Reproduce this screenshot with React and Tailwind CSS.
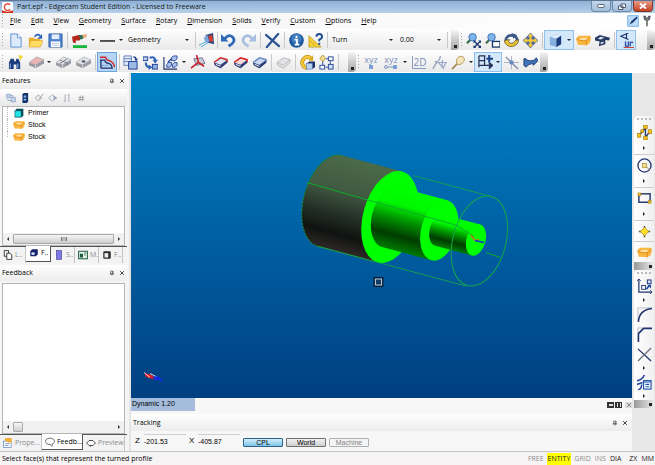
import React, { useState } from 'react';

const NAVY = '#1c3f94';

const stockShape = (
  <>
    <path d="M0 6 L3 3 L15 3 L16 6 L14.500 11 L11 13 L2 12.500 Z" fill="#f9b642" />
    <path d="M3 7 L6 5 L13 5.500 L9 8 Z" fill="#ffe0a0" />
    <path d="M1 6 L4 8 L11 8.500 L15 4 M11 8.500 V13" stroke="#e08a1a" fill="none" />
  </>
);

const solidShape = (top, edge) => (
  <>
    <path d="M1 8 L8 3 L15 5 L15 8 L8 14 L2 11 Z" fill="#5d6f96" />
    <path d="M1 8 L8 3 L15 5 L8 10.500 Z" fill={top} />
    <path d="M1 8 L8 3 L15 5 L15 8" stroke={edge} strokeWidth="1.600" fill="none" />
    <path d="M1 8 L8 11 L15 6 L15 8.500 L8 14 L2 11 Z" fill="#2c3c74" />
    <path d="M3 10 L8 12" stroke="#fff" strokeWidth="1" />
  </>
);

const greyBlock = (top) => (
  <>
    <path d="M0 8 L8 2 L16 5 V9 L7 14 L0 11 Z" fill="#9a9ca5" />
    <path d="M0 8 L8 2 L16 5 L7 10.500 Z" fill={top} stroke="#a9abb3" strokeWidth=".6" />
    <path d="M7 10.500 V14" stroke="#d9dae0" />
  </>
);

const ICONS = {
  logo: (
    <>
      <rect width="16" height="16" rx="2" fill="#fff" />
      <path d="M12 4 A5 5 0 1 0 12 11" stroke="#e04a3a" strokeWidth="2" fill="none" />
      <path d="M0 12 Q8 16 16 12 V16 H0 Z" fill="#d8301f" />
    </>
  ),
  newFile: (
    <>
      <path d="M3 1 H10 L14 5 V15 H3 Z" fill="#dcebfb" stroke="#5f8fd0" />
      <path d="M10 1 V5 H14" fill="#fff" stroke="#5f8fd0" />
    </>
  ),
  open: (
    <>
      <path d="M1 5 H6 L7 6 H13 V15 H1 Z" fill="#e8b030" />
      <path d="M3 8 H16 L13 15 H1 Z" fill="#ffdc62" stroke="#d79c1c" strokeWidth=".6" />
      <path d="M7 4 Q10 0 13 3" stroke="#2c62b8" strokeWidth="1.800" fill="none" />
      <path d="M15 1 V6 H10 Z" fill="#2c62b8" />
    </>
  ),
  save: (
    <>
      <path d="M1 1 H15 V15 H1 Z" fill="#4f84cf" stroke="#2f5ea8" />
      <rect x="4" y="1.500" width="8" height="5" fill="#e4eefb" />
      <rect x="3" y="9" width="10" height="6" fill="#fff" />
      <path d="M4 11 H12 M4 13 H12" stroke="#9fb8dc" strokeWidth=".8" />
    </>
  ),
  brush: (
    <>
      <path d="M16 1 L10 2 L8 6 L15 5 Z" fill="#e7b07c" />
      <path d="M0 4 L7 2 L10 5 L8 8 L4 8 L4 11 L1 10 Z" fill="#b3261b" />
      <path d="M7 2 L11 2 L12 6 L9 7 Z" fill="#2b6f5a" />
      <rect x="1" y="13" width="15" height="3" fill="#18b43c" />
    </>
  ),
  line: <path d="M0 8.500 H16" stroke="#222" strokeWidth="1.600" />,
  eraser: (
    <>
      <path d="M7 2 L15 0 L16 12 L9 10 Z" fill="#24467f" />
      <path d="M10 3 L14 2 L15 9 L11 9 Z" fill="#d7402f" />
      <path d="M5 5 L9 2 L11 9 L7 10 Z" fill="#7fa4d8" />
      <path d="M0 13 L8 9 M2 15 L10 10" stroke="#4aa8d8" strokeWidth="1" />
    </>
  ),
  undo: (
    <>
      <path d="M4 6 Q9 0 13 5 Q16 10 8 14" stroke="#2f69b8" strokeWidth="3" fill="none" />
      <path d="M0 1 V9 H8 Z" fill="#2f69b8" />
    </>
  ),
  redo: (
    <>
      <path d="M12 6 Q7 0 3 5 Q0 10 8 14" stroke="#a9bfdf" strokeWidth="3" fill="none" />
      <path d="M16 1 V9 H8 Z" fill="#a9bfdf" />
    </>
  ),
  cross: <path d="M1 2 L15 14 M14 1 L2 15" stroke="#2c5596" strokeWidth="2.400" strokeLinecap="round" />,
  info: (
    <>
      <circle cx="8" cy="8" r="7.800" fill="#1f5a9e" />
      <circle cx="8" cy="6" r="5.500" fill="#3f7cc0" />
      <path d="M8 3 V5.200 M6 7 H8.500 V12 M6 12.500 H11" stroke="#fff" strokeWidth="1.900" fill="none" />
    </>
  ),
  help: (
    <>
      <path d="M1 3 L14 15 H1 Z" fill="#f6d33a" stroke="#b8931a" strokeWidth=".8" />
      <path d="M3 9 L7 13" stroke="#8a6b10" strokeWidth="1" strokeDasharray="1 1" />
      <path d="M9 4 Q9 1 12 1 Q15 1 15 4 Q15 6 12 7 V9" stroke="#1d4b96" strokeWidth="2" fill="none" />
      <circle cx="12" cy="11.500" r="1.200" fill="#1d4b96" />
    </>
  ),
  zoomAll: (
    <>
      <path d="M1 11 L5 7" stroke="#3b6f4c" strokeWidth="2.400" />
      <circle cx="7" cy="4.500" r="4" fill="#7fb4ea" stroke="#3a72b8" />
      <path d="M9 9 L15 15 M15 9 L9 15" stroke="#16356f" strokeWidth="1.400" />
      <path d="M8 8 h3 l-3 3 z M16 8 v3 l-3 -3 z M8 16 v-3 l3 3 z M16 16 h-3 l3 -3 z" fill="#16356f" />
    </>
  ),
  zoomBox: (
    <>
      <path d="M1 11 L5 7" stroke="#3b6f4c" strokeWidth="2.400" />
      <circle cx="7" cy="4.500" r="4" fill="#7fb4ea" stroke="#3a72b8" />
      <rect x="8" y="9" width="8" height="6" fill="#fff" stroke="#16356f" strokeWidth="1.400" />
    </>
  ),
  rotate: (
    <>
      <ellipse cx="8" cy="7.500" rx="6" ry="5" stroke="#3a5486" strokeWidth="3" fill="none" />
      <path d="M0 8 Q2 15 9 14.500 Q15 13 16 7 L12 8 Q11 11 8 11 Q5 11 5 9 L6 7 Z" fill="#ecc32f" stroke="#5b5a3a" strokeWidth=".8" />
      <path d="M8 0 L14 2 L10 6 Z" fill="#3a5486" />
    </>
  ),
  pan: (
    <>
      <path d="M4 4 L12 12 M12 4 L4 12" stroke="#27479a" strokeWidth="1.800" />
      <path d="M8 0 L11.500 4 H9.500 V6.500 H12 V4.500 L16 8 L12 11.500 V9.500 H9.500 V12 H11.500 L8 16 L4.500 12 H6.500 V9.500 H4 V11.500 L0 8 L4 4.500 V6.500 H6.500 V4 H4.500 Z" fill="#f4cc35" stroke="#5b6698" strokeWidth=".9" />
    </>
  ),
  cube: (
    <>
      <path d="M2 4 L8 1 L14 3 V12 L9 15 L2 13 Z" fill="#86aede" />
      <path d="M2 4 L8 1 L14 3 L9 6 Z" fill="#dceafb" />
      <path d="M9 6 L14 3 V12 L9 15 Z" fill="#1d3c7c" />
    </>
  ),
  stock: stockShape,
  hat: (
    <>
      <path d="M0 5 L5 2 L16 5 L15 8 L11 7.500 L11 12 L4 14 L5 9 L0 8 Z" fill="#2a3b63" />
      <path d="M3 6 L6 4 L10 5 L6 7 Z M6 10 L9 9 V11 L6 12 Z" fill="#dde4f2" />
    </>
  ),
  view: (
    <>
      <path d="M10 0 L2 3.500 L10 7 M8 1 V6" stroke="#1a2f66" strokeWidth="1.200" fill="none" />
      <rect x="5" y="8" width="11" height="8" fill="#c3dcf6" />
      <path d="M7 9 V14 H10 V9 M12 14 V10 H15" stroke="#2b4ea0" strokeWidth="1.300" fill="none" />
      <path d="M5 15.500 H16" stroke="#d23322" strokeWidth="1" />
    </>
  ),
  binoculars: (
    <>
      <path d="M1 15 V8 L3 4 H6 L7 7 H8 L9 4 H11 L13 8 V15 H9 V10 H6 V15 Z" fill="#1c3d7d" />
      <path d="M2.500 9 V14 M10.500 9 V14" stroke="#7aa5e0" strokeWidth="1.200" />
      <path d="M11 0 L16 1 L13 6 Z" fill="#ecd63a" />
    </>
  ),
  block: greyBlock('#eab5b3'),
  blocks: (
    <>
      {greyBlock('#e2e3e8')}
      <path d="M4 5.500 L12 8.500 V11 M4 9.200 L12 4" stroke="#7c7e88" fill="none" />
    </>
  ),
  blockHole: (
    <>
      {greyBlock('#e2e3e8')}
      <ellipse cx="8" cy="6.800" rx="2" ry="1.300" fill="#555762" />
    </>
  ),
  turn: (
    <>
      <path d="M0 2.500 H6 Q7 6 10 6 Q15 8 15.500 13" stroke="#cf2a2a" strokeWidth="1.600" fill="none" />
      <path d="M0 5.500 H5 Q6 9 9 9 Q13 10 13 15 M1 6 V14 M1 14 H13" stroke="#20336f" strokeWidth="1.400" fill="none" />
      <path d="M2 11 H9" stroke="#5f86bd" strokeDasharray="2 1" />
    </>
  ),
  copyBox: (
    <>
      <path d="M1 1 H9 V11 H1 Z" fill="#e3ecf8" stroke="#5f7fbf" />
      <path d="M1 4 H9 M1 7 H6" stroke="#5f7fbf" />
      <rect x="6" y="7" width="9" height="8" fill="#9dbbe6" stroke={NAVY} />
      <path d="M11 2 Q14 2 14 5" stroke={NAVY} strokeWidth="1.400" fill="none" />
      <path d="M12 4 H16 L14 7 Z" fill={NAVY} />
    </>
  ),
  swap: (
    <>
      <rect x="0" y="2" width="5" height="4" fill="#b9cdec" stroke={NAVY} />
      <rect x="10" y="10" width="6" height="5" fill="#8eaee0" stroke={NAVY} />
      <path d="M7 3 Q13 1 13 6 M3 8 Q3 13 7 13" stroke="#2b60b4" strokeWidth="2.200" fill="none" />
      <path d="M10 5 H16 L13 9 Z M6 10 L10 13 L6 16 Z" fill="#2b60b4" />
    </>
  ),
  array: (
    <>
      <path d="M1 2 V15 H15" stroke="#20336f" strokeWidth="1.200" fill="none" />
      <path d="M9 3 L11 1 H15 V4 L13 6 H9 Z M4 10 L6 8 H9 V11 L7 13 H4 Z M10 10 L12 8 H15 V11 L13 13 H10 Z" fill="#a9c3ee" stroke={NAVY} strokeWidth=".9" />
      <path d="M5 8 L9 4" stroke={NAVY} strokeWidth="1.200" />
    </>
  ),
  axes: (
    <>
      <path d="M4 4 L13 3 L16 9 L7 11 Z" fill="#c9cbd8" stroke="#6c7390" />
      <path d="M7 0 L9 8 L1 14 M9 8 L15 12" stroke="#c8202a" strokeWidth="1.700" fill="none" />
    </>
  ),
  solidBlue: solidShape('#dce6f6', '#cf2a2a'),
  solidRed: solidShape('#f6d8d8', '#d42020'),
  solidGrey: solidShape('#c9d9ef', '#6f8fc2'),
  solidOff: (
    <>
      <path d="M1 8 L8 3 L15 5 V8 L8 14 L2 11 Z" fill="#e3e3e6" stroke="#b9b9be" />
      <path d="M1 8 L8 11 L15 5" stroke="#b9b9be" fill="none" />
    </>
  ),
  regen: (
    <>
      <path d="M12 4 Q8 0 4 4 Q0 9 5 13 L8 14" stroke="#b58510" strokeWidth="4" fill="none" />
      <path d="M12 4 Q8 0 4 4 Q0 9 5 13 L8 14" stroke="#f4c93a" strokeWidth="2.600" fill="none" />
      <path d="M14 0 V6 H9 Z" fill="#d9a820" />
      <path d="M7 9 L10 7 H16 L13 9 Z M13 9 L16 7 V13 L13 15 Z" fill="#20336f" />
      <rect x="7" y="9" width="6" height="6" fill="#bcd4f4" stroke="#4f6fb0" strokeWidth=".6" />
    </>
  ),
  flow: (
    <>
      <path d="M4 6 V11 M7 4 H10 M12 6 V10 M7 13 H10" stroke="#27479a" />
      <path d="M4 0 L7 3.500 L4 7 L1 3.500 Z" fill="#f4e08a" stroke="#a8821a" strokeWidth=".8" />
      <rect x="10" y="2" width="5" height="4" fill="#fff" stroke="#27479a" />
      <rect x="1" y="11" width="5" height="4" fill="#fff" stroke="#27479a" />
      <rect x="10" y="10" width="5" height="5" fill="#cfe0f8" stroke="#27479a" />
    </>
  ),
  polyOff: (
    <>
      <path d="M1 15 Q4 8 6 8 M3 7 Q8 8 9 1" stroke="#9aa4bd" strokeWidth="1.500" fill="none" />
      <path d="M7 8 H15 L12 14 Z M11 5 V14" stroke="#97a5c6" strokeWidth="1.200" fill="none" />
    </>
  ),
  key: (
    <>
      <path d="M1 15 L7 9" stroke="#a08a52" strokeWidth="1.800" />
      <path d="M6 5 Q8 0 13 2 Q16 5 12 9 Q8 12 6 9 Z" fill="#f5e4bb" stroke="#b59a5e" />
    </>
  ),
  snapGrid: (
    <>
      <path d="M1 1 H8 M1 1 V13 M1 6 H7 M1 11 H11 M7 1 V11" stroke="#222f55" strokeWidth="1.300" />
      <path d="M10 11 H15 M12 8 L16 11 L12 15 Z" stroke="#222f55" fill="#222f55" />
      <path d="M12 0 V8 M9 4 H16" stroke="#1c4084" strokeWidth="2.200" />
    </>
  ),
  star: (
    <>
      <path d="M0 8 H16 M8 1 V15" stroke="#a7b0c4" />
      <path d="M2 2 L15 15" stroke="#7e8aa6" strokeWidth="1.400" />
      <rect x="6" y="6" width="4" height="4" fill="#6489c6" />
    </>
  ),
  flag: <path d="M1 4 V11 L3 13 Q6 9 11 9 L11 11 L16 6 L14 3 L13 5 Q6 8 3 4 Z" fill="#3f74bc" stroke="#17366e" />,
  spline: (
    <>
      <path d="M2 11 L6 7 L9 3 V13 L13 8" stroke="#20336f" strokeWidth="1.400" fill="none" />
      <path d="M0 9 h4 v4 h-4z M7 0 h4 v4 h-4z M7 12 h4 v4 h-4z M12 5 h4 v4 h-4z M4 5 h3 v3 h-3z" fill="#f6c21c" stroke="#9a7510" strokeWidth=".7" />
    </>
  ),
  circle: (
    <>
      <circle cx="8" cy="8" r="7" stroke="#20336f" strokeWidth="1.400" fill="none" />
      <path d="M8 8 L13 12" stroke="#a8861c" />
      <rect x="6" y="6" width="4" height="4" fill="#f3dc8a" stroke="#9a7510" strokeWidth=".6" />
    </>
  ),
  rect: (
    <>
      <rect x="2" y="3" width="12" height="9" stroke="#20336f" strokeWidth="1.500" fill="none" />
      <path d="M1 2 h3 v3 h-3z M12 10 h3 v3 h-3z" fill="#f6c21c" stroke="#9a7510" strokeWidth=".6" />
    </>
  ),
  point: (
    <>
      <path d="M8 2 V14 M2 8 H14" stroke="#54562f" strokeWidth="1.600" />
      <path d="M8 3.500 L12.500 8 L8 12.500 L3.500 8 Z" fill="#fbe02b" stroke="#b08a14" strokeWidth=".8" />
    </>
  ),
  boxes: (
    <>
      <path d="M2 0 V14 H16" stroke="#20336f" strokeWidth="1.300" fill="none" />
      <path d="M0 2 L2 0 L4 2 M14 12 L16 14 L14 16" stroke="#20336f" fill="none" />
      <rect x="5" y="7" width="4" height="4" fill="#fff" stroke="#20336f" />
      <rect x="11" y="1" width="4" height="4" fill="#cfe0f8" stroke="#20336f" />
      <path d="M10 11 L13 7" stroke="#1c4fa8" strokeWidth="1.800" />
      <path d="M11 6 H15 V10 Z" fill="#1c4fa8" />
    </>
  ),
  fillet: (
    <>
      <path d="M1 16 V1 H16" stroke="#b6bac5" fill="none" />
      <path d="M1.500 16 Q2 3 16 1.500" stroke="#20336f" strokeWidth="1.600" fill="none" />
    </>
  ),
  chamfer: (
    <>
      <path d="M1 6 V1 H6" stroke="#b6bac5" fill="none" />
      <path d="M1.500 16 V7 L7 1.500 H16" stroke="#20336f" strokeWidth="1.800" fill="none" />
    </>
  ),
  trim: (
    <>
      <path d="M1 2 L15 15" stroke="#20336f" strokeWidth="1.400" />
      <path d="M15 1 L1 15" stroke="#6b7180" strokeWidth="1.400" />
    </>
  ),
  modify: (
    <>
      <path d="M0 6 Q5 6 8 0 M0 10 L6 8 M1 16 Q5 15 5 10" stroke="#27479a" strokeWidth="1.700" fill="none" />
      <rect x="7" y="6" width="8" height="9" fill="#fff" stroke="#1c4fa8" strokeWidth="1.200" />
      <path d="M7 7.500 H15 M9 10 H13 M9 12.500 H13" stroke="#1c4fa8" strokeWidth="1.200" />
    </>
  ),
  pencil: (
    <>
      <rect x="1" y="1" width="14" height="14" fill="#bcdcfa" stroke="#5aa0e0" />
      <path d="M3 13 L6 8 L13 2 L14 4 L8 10 Z" fill="#17366e" />
    </>
  ),
  spindle: (
    <>
      <path d="M3 1 H6 L8 4 L10 1 H13 L12 6 L9 8 H7 L4 6 Z" fill="#4a5474" />
      <path d="M5 3 L8 6 L11 3" stroke="#d8c24a" strokeWidth="1" fill="none" />
      <path d="M8 7 V15" stroke="#7d7f76" strokeWidth="2.500" />
    </>
  ),
  treeBoxes: (
    <>
      <path d="M1 2 H7 V7 H1 Z M8 7 H15 V14 H8 Z" fill="#c6d5ec" stroke="#7990bb" />
      <path d="M3 8 V12 H8 M7 4 H11 V7" stroke="#7990bb" fill="none" />
    </>
  ),
  traffic: (
    <>
      <path d="M4 2 L6 0 H13 V13 L11 16 H4 Z" fill="#12306b" />
      <path d="M6 4 h4 v3 h-4z M6 9 h4 v3 h-4z" fill="#86b4ee" />
    </>
  ),
  tag: (
    <>
      <path d="M2 8 L7 3 L12 8 L7 13 Z" stroke="#9a9a9a" strokeWidth="1.300" fill="#eee" />
      <path d="M8 10 L15 1" stroke="#9a9a9a" strokeWidth="1.300" />
    </>
  ),
  diamond: (
    <>
      <path d="M1 8 L7 3 L13 8 L7 13 Z" stroke="#9a9fac" strokeWidth="1.200" fill="#eef1f6" />
      <path d="M9 4 L15 8 L9 12 Z" fill="#9aa3b8" />
    </>
  ),
  sort: <path d="M5 2 V14 M11 2 V14 M3 12 L5 14 M9 4 L11 2" stroke="#9a9fac" strokeWidth="1.300" fill="none" />,
  hash: <path d="M7 4 L6 13 M11 4 L10 13 M4 7 H13 M4 10.500 H13" stroke="#8a8a8a" strokeWidth="1.100" />,
  cyanCube: (
    <>
      <path d="M1 5 L4 1 H15 V12 L12 15 H1 Z" fill="#0a4f5c" />
      <rect x="2" y="5" width="9" height="9" fill="#20e6e6" />
    </>
  ),
  layers: (
    <>
      <path d="M2 1 H9 V10 H2 Z" fill="#fff" stroke="#222" strokeWidth="1.400" />
      <path d="M6 5 H11 L14 8 V15 H6 Z" fill="#fff" stroke="#222" strokeWidth="1.400" />
    </>
  ),
  featureCube: (
    <>
      <path d="M5 2 H14 V10 L11 13 H2 V5 Z" fill="#14246a" />
      <path d="M4 7 H9 V11 H4 Z" fill="#dfe6fa" />
    </>
  ),
  purpleBar: <rect x="4" y="1" width="8" height="14" fill="#7d78e8" stroke="#3c3a8c" />,
  macro: (
    <>
      <rect x="1" y="2" width="14" height="12" fill="#e8f4ee" stroke="#1c5a3c" strokeWidth="1.600" />
      <rect x="3" y="6" width="5" height="6" fill="#1c5a3c" />
      <path d="M10 5 H13 M10 8 H12" stroke="#1c5a3c" strokeWidth="1.600" />
    </>
  ),
  darkBox: (
    <>
      <rect x="2" y="2" width="12" height="12" rx="2" fill="#2b2b2b" />
      <rect x="4" y="5" width="6" height="7" fill="#eee" />
    </>
  ),
  props: (
    <>
      <rect x="1" y="5" width="12" height="10" fill="#fff" stroke="#4a78b8" />
      <path d="M3 9 H11 M3 12 H9" stroke="#4a78b8" />
      <path d="M3 0 H14 V7 H8 L3 4 Z" fill="#f0b040" />
    </>
  ),
  bubble: (
    <>
      <ellipse cx="8" cy="7" rx="7" ry="5" fill="#fff" stroke="#444" strokeWidth="1.200" />
      <path d="M8 12 L11 15 L12 11" fill="#fff" stroke="#444" />
    </>
  ),
  eye: (
    <>
      <path d="M1 8 L5 4 H11 L15 8 L11 12 H5 Z" fill="#fff" stroke="#333" strokeWidth="1.400" />
      <path d="M5 12 L8 14" stroke="#333" />
    </>
  ),
  pin: <path d="M4 3 H11 V10 H4 Z M9 3 V10 M2 10.500 H14 M8 10 V15" stroke="#333" strokeWidth="1.500" fill="none" />,
  close: <path d="M3 3 L13 13 M13 3 L3 13" stroke="#222" strokeWidth="2.200" />,
};

const Icon = ({ name, className = 'size-4' }) => (
  <svg viewBox="0 0 16 16" fill="none" aria-hidden="true" className={`${className} shrink-0`}>
    {ICONS[name]}
  </svg>
);

const Tool = ({ name, label, className = 'w-5' }) => (
  <button type="button" aria-label={label || name} className={`${className} flex h-5 shrink-0 items-center justify-center`}>
    <Icon name={name} className="size-[15px]" />
  </button>
);

const Arrow = ({ className = 'w-2' }) => (
  <button type="button" aria-label="More" className={`${className} flex h-5 shrink-0 items-center justify-center`}>
    <svg viewBox="0 0 4 2" className="w-1"><path d="M0 0 H4 L2 2 Z" fill="#222" /></svg>
  </button>
);

const Sep = () => <span className="flex w-1 shrink-0 justify-center"><span className="h-4 w-px bg-[#c9c9c9]" /></span>;

const Grip = () => <span className="h-4 w-[5px] shrink-0 bg-[radial-gradient(#a8a8a8_35%,transparent_40%)] bg-[length:3px_3px] bg-[position:1px_0] bg-repeat-y" />;

const EndCap = () => (
  <span className="flex h-5 w-2 shrink-0 items-end justify-center rounded-r-sm bg-gradient-to-b from-[#f4f4f4] to-[#a4a4a4]">
    <span className="mb-0.5 h-[3px] w-[3px] bg-[#222]" />
  </span>
);

const Combo = ({ label, value, className }) => (
  <span className={`${className} flex shrink-0 items-center`}>
    <select aria-label={label} defaultValue={value} className="h-4 w-full min-w-0 appearance-none bg-transparent pl-[3px] leading-3 outline-none">
      <option>{value}</option>
    </select>
    <svg viewBox="0 0 4 2" className="w-1 shrink-0"><path d="M0 0 H4 L2 2 Z" fill="#222" /></svg>
  </span>
);

const menus = [
  ['F', 'ile'], ['E', 'dit'], ['V', 'iew'], ['G', 'eometry'], ['S', 'urface'], ['R', 'otary'],
  ['D', 'imension'], ['S', 'olids'], ['V', 'erify'], ['C', 'ustom'], ['O', 'ptions'], ['H', 'elp'],
];

const TitleBar = () => (
  <header className="flex h-[13px] shrink-0 items-center border-t border-[#5d7693] bg-gradient-to-b from-[#8fb0d6] to-[#b6cfe9] pl-0.5">
    <Icon name="logo" className="size-[11px]" />
    <h1 className="ml-1 text-[#101820]">Part.epf - Edgecam Student Edition - Licensed to Freeware</h1>
    <div className="ml-auto flex h-full gap-px pb-px pr-0.5">
      <button type="button" aria-label="Minimize" className="flex w-5 items-center justify-center rounded-b-sm border border-t-0 border-[#7089a8] bg-gradient-to-b from-[#c3d6ec] to-[#a4bedb]">
        <span className="h-1 w-2 rounded-sm border border-[#5c6b80] bg-white" />
      </button>
      <button type="button" aria-label="Restore" className="flex w-5 items-center justify-center rounded-b-sm border border-t-0 border-[#7089a8] bg-gradient-to-b from-[#c3d6ec] to-[#a4bedb]">
        <svg viewBox="0 0 8 7" className="w-2"><path d="M3 1 H7.500 V4.500 H3 Z M.5 3 H5 V6.500 H.5 Z" fill="#fff" stroke="#4c5b70" /></svg>
      </button>
      <button type="button" aria-label="Close" className="flex w-5 items-center justify-center rounded-b-sm border border-t-0 border-[#7c3526] bg-gradient-to-b from-[#e59a86] to-[#c5401f]">
        <svg viewBox="0 0 8 6" className="w-2"><path d="M1 .5 L7 5.500 M7 .5 L1 5.500" stroke="#fff" strokeWidth="1.800" /></svg>
      </button>
    </div>
  </header>
);

const MenuBar = () => (
  <nav className="flex h-4 shrink-0 items-center bg-gradient-to-r from-[#f3f3f3] to-white">
    <Grip />
    {menus.map(([first, rest]) => (
      <button key={first + rest} type="button" className="px-[5px] leading-3">
        <u>{first}</u>{rest}
      </button>
    ))}
    <div className="ml-auto flex gap-0.5 pr-0.5">
      <Icon name="pencil" className="size-3" />
      <Icon name="spindle" className="size-3" />
    </div>
  </nav>
);

const barBg = 'bg-gradient-to-b from-[#fdfdfd] to-[#e9e9e9]';

const MainToolbar = () => (
  <div className="flex h-[22px] shrink-0 items-center bg-white">
    <div className={`flex items-center ${barBg}`}>
      <Grip />
      <Tool name="newFile" label="New" />
      <Tool name="open" label="Open" />
      <Tool name="save" label="Save" />
      <Sep />
      <Tool name="brush" label="Colour" />
      <Arrow />
      <Tool name="line" label="Line style" />
      <Arrow />
      <Combo label="Layer" value="Geometry" className="w-16" />
      <span className="w-1" />
      <Sep />
      <Tool name="eraser" label="Erase" className="w-[18px]" />
      <Sep />
      <Tool name="undo" label="Undo" className="w-[19px]" />
      <Tool name="redo" label="Redo" />
      <Sep />
      <Tool name="cross" label="Delete" />
      <Sep />
      <Tool name="info" label="Information" />
      <Tool name="help" label="Help" className="w-[19px]" />
      <Sep />
      <Combo label="Mode" value="Turn" className="w-16" />
      <Combo label="Level" value="0.00" className="w-12 pl-1" />
      <span className="w-1" />
      <Sep />
      <span className="w-0.5" />
      <EndCap />
    </div>
    <div className={`flex min-w-0 flex-1 items-center ${barBg}`}>
      <Grip />
      <Tool name="zoomAll" label="Zoom extents" className="w-[19px]" />
      <Tool name="zoomBox" label="Zoom window" className="w-[19px]" />
      <Tool name="rotate" label="Rotate view" className="w-[19px]" />
      <Tool name="pan" label="Pan view" className="w-[19px]" />
      <Sep />
      <span className="flex h-5 shrink-0 items-center border border-[#8fc0ee] bg-[#d3e8fb]">
        <Tool name="cube" label="Shaded" />
        <Arrow />
      </span>
      <Tool name="stock" label="Show stock" className="w-[19px]" />
      <Tool name="hat" label="Show fixtures" className="w-[19px]" />
      <Sep />
      <span className="flex h-5 shrink-0 items-center border border-[#8fc0ee] bg-[#d3e8fb]">
        <Tool name="view" label="View plane" className="w-[18px]" />
      </span>
      <span className="ml-auto"><EndCap /></span>
    </div>
  </div>
);

const XyzTool = ({ label, linked }) => (
  <button type="button" aria-label={label} className="flex h-5 w-5 shrink-0 flex-col items-center justify-center text-[#7d90ba]">
    <span className="text-[9px] leading-[9px]">xyz</span>
    <svg viewBox="0 0 16 6" className="w-4">
      {linked && <path d="M5 3 H11" stroke="#7d90ba" />}
      {linked && <circle cx="3" cy="3" r="1.500" fill="none" stroke="#7d90ba" />}
      <rect x={linked ? 10 : 6} y="1" width="4" height="4" fill="#7ea0d6" />
    </svg>
  </button>
);

const FeatureToolbar = () => (
  <div className="flex h-[22px] shrink-0 items-center bg-white">
    <div className={`flex items-center ${barBg}`}>
      <Grip />
      <Tool name="binoculars" label="Find" />
      <span className="w-0.5" />
      <Tool name="block" label="Face" className="w-[18px]" />
      <Arrow />
      <Tool name="blocks" label="Features" />
      <Tool name="blockHole" label="Holes" />
      <Sep />
      <span className="flex h-5 shrink-0 items-center border border-[#6ba4dc] bg-[#b5d5f3]">
        <Tool name="turn" label="Turn feature" className="w-[18px]" />
      </span>
      <Sep />
      <Tool name="copyBox" label="Copy" className="w-[19px]" />
      <Tool name="swap" label="Transform" />
      <Tool name="array" label="Array" />
      <Arrow />
      <Tool name="axes" label="Axes" className="w-[19px]" />
      <span className="w-1" />
      <Tool name="solidBlue" label="Solid edges" className="w-[19px]" />
      <Tool name="solidRed" label="Solid faces" />
      <Tool name="solidGrey" label="Solid body" className="w-[19px]" />
      <Sep />
      <Tool name="solidOff" label="Hide solid" />
      <Sep />
      <Tool name="regen" label="Regenerate" />
      <Tool name="flow" label="Sequence" className="w-[19px]" />
      <Sep />
      <span className="w-2" />
      <EndCap />
    </div>
    <div className={`flex items-center ${barBg}`}>
      <Grip />
      <XyzTool label="Coordinates" />
      <XyzTool label="Relative coordinates" linked />
      <Arrow />
      <button type="button" className="flex h-5 w-5 shrink-0 items-center justify-center">
        <span className="border-b border-l border-[#8b9cc4] pl-px text-[10px] leading-3 text-[#7d90ba]">2D</span>
      </button>
      <Tool name="polyOff" label="Profile" />
      <Tool name="key" label="Snap" className="w-[19px]" />
      <Arrow className="w-1.5" />
      <span className="flex h-5 shrink-0 items-center border border-[#8fc0ee] bg-[#d3e8fb]">
        <Tool name="snapGrid" label="Grid snap" />
        <Arrow className="w-1.5" />
      </span>
      <Tool name="star" label="Intersection" className="w-[18px]" />
      <Tool name="flag" label="Chain" />
      <EndCap />
    </div>
  </div>
);

const PanelHeader = ({ title }) => (
  <div className="flex h-4 shrink-0 items-center bg-gradient-to-b from-white to-[#ececec] px-0.5">
    <h2>{title}</h2>
    <button type="button" aria-label={`Pin ${title}`} className="ml-auto mr-1"><Icon name="pin" className="size-1.5" /></button>
    <button type="button" aria-label={`Close ${title}`}><Icon name="close" className="size-1.5" /></button>
  </div>
);

const ScrollBar = ({ thumb }) => (
  <div className="flex h-3 shrink-0 items-center gap-1 bg-[#f1f1f1] px-1">
    <svg viewBox="0 0 2 4" className="h-1 w-0.5 shrink-0"><path d="M2 0 V4 L0 2 Z" fill="#333" /></svg>
    <span className={`${thumb} flex h-2.5 items-center justify-center rounded-[1px] border border-[#a9a9a9] bg-gradient-to-b from-[#f6f6f6] to-[#cfcfcf]`}>
      {thumb === 'flex-1' && <span className="h-1 w-1.5 border-x border-[#777] bg-[#bbb]" />}
    </span>
    <svg viewBox="0 0 2 4" className="ml-auto h-1 w-0.5 shrink-0"><path d="M0 0 V4 L2 2 Z" fill="#333" /></svg>
  </div>
);

const TabStrip = ({ tabs, active, onSelect }) => (
  <div role="tablist" className="flex h-[17px] shrink-0 border-t border-[#555] bg-[#f3f3f3]">
    {tabs.map(([name, icon, width]) => (
      <button
        key={icon}
        type="button"
        role="tab"
        aria-selected={active === icon}
        onClick={() => onSelect(icon)}
        className={`${width} flex h-4 items-center gap-0.5 overflow-hidden whitespace-nowrap border-r pl-[3px] ${
          active === icon ? '-mt-px border-b border-[#555] bg-white text-black' : 'border-[#c4c4c4] text-[#8b8b8b]'
        }`}
      >
        <Icon name={icon} className="size-2.5" />
        {name}
      </button>
    ))}
  </div>
);

const tree = [
  ['Primer', 'cyanCube', 'size-2.5'],
  ['Stock', 'stock', 'size-3'],
  ['Stock', 'stock', 'size-3'],
];

const LeftPanels = () => {
  const [topTab, setTopTab] = useState('featureCube');
  const [bottomTab, setBottomTab] = useState('bubble');

  return (
    <aside className="flex w-[131px] shrink-0 flex-col border-r-2 border-[#e4e4e4] bg-[#f5f5f5] pr-0.5">
      <PanelHeader title="Features" />
      <div className="flex h-[17px] shrink-0 items-center gap-1 bg-gradient-to-b from-white to-[#e8e8e8] pl-1.5">
        {['treeBoxes', 'traffic', 'tag', 'diamond', 'sort', 'hash'].map((name) => (
          <button key={name} type="button" aria-label={name}><Icon name={name} className="size-2.5" /></button>
        ))}
      </div>
      <div className="mx-0.5 flex min-h-0 flex-[142] flex-col border border-[#b5b5b5] bg-white">
        <ul className="flex-1 pl-1">
          {tree.map(([name, icon, size], i) => (
            <li key={i} className="flex h-3 items-center font-['Liberation_Sans',sans-serif] font-normal">
              <span className={`${i === 2 ? 'h-1.5 self-start' : 'h-3'} w-1 border-l border-dotted border-[#bbb]`} />
              <span className="mr-px flex w-4 justify-center"><Icon name={icon} className={size} /></span>
              {name}
            </li>
          ))}
        </ul>
        <ScrollBar thumb="flex-1" />
      </div>
      <TabStrip
        active={topTab}
        onSelect={setTopTab}
        tabs={[
          ['L..', 'layers', 'w-[26px]'],
          ['F..', 'featureCube', 'w-[25px]'],
          ['S..', 'purpleBar', 'w-6'],
          ['M.', 'macro', 'w-6'],
          ['F..', 'darkBox', 'w-6'],
        ]}
      />
      <div className="h-0.5 shrink-0" />
      <PanelHeader title="Feedback" />
      <div className="mx-0.5 mt-0.5 flex min-h-0 flex-[154] flex-col border border-[#b5b5b5] bg-white">
        <div className="flex-1" />
        <ScrollBar thumb="w-2.5" />
      </div>
      <TabStrip
        active={bottomTab}
        onSelect={setBottomTab}
        tabs={[
          ['Prope...', 'props', 'w-[42px]'],
          ['Feedb...', 'bubble', 'w-[41px]'],
          ['Preview', 'eye', 'w-[42px]'],
        ]}
      />
    </aside>
  );
};

const Viewport = () => (
  <div className="min-h-0 flex-1 bg-gradient-to-b from-[#0083c8] to-[#003f80]">
    <svg viewBox="131 74 501 324" className="size-full" role="img" aria-label="Turned part with stock">
      <defs>
        <linearGradient id="body" x1="0" y1="0" x2="0" y2="1">
          <stop offset="0" stopColor="#4b6b48" />
          <stop offset=".35" stopColor="#415a42" />
          <stop offset=".6" stopColor="#253228" />
          <stop offset=".82" stopColor="#101311" />
          <stop offset="1" stopColor="#2e2827" />
        </linearGradient>
        <linearGradient id="step" x1="0" y1="0" x2="0" y2="1">
          <stop offset="0" stopColor="#00ff00" />
          <stop offset=".26" stopColor="#00f800" />
          <stop offset=".5" stopColor="#009400" />
          <stop offset=".76" stopColor="#003c00" />
          <stop offset="1" stopColor="#007a00" />
        </linearGradient>
      </defs>
      <g transform="translate(390 217.500) rotate(15)">
        <path d="M0 -47 H-62 A26.500 47 0 0 0 -62 47 H0 Z" fill="url(#body)" />
        <path d="M-62 -47 A26.500 47 0 0 0 -62 47 H0" stroke="#1d8a1d" strokeDasharray="2 1.500" fill="none" />
        <ellipse rx="27" ry="47" fill="#00ff00" />
        <path d="M0 -31 H51 V31 H0 A18 31 0 0 1 0 -31 Z" fill="url(#step)" />
        <ellipse cx="51" rx="18" ry="31" fill="#00ff00" />
        <path d="M51 -16 H89 V16 H51 A9.500 16 0 0 1 51 -16 Z" fill="url(#step)" />
        <ellipse cx="89" rx="9.500" ry="16" fill="#00ff00" />
        <ellipse cx="92.500" rx="26.500" ry="46" stroke="#16a64a" fill="none" />
        <path d="M12 -46 H92 M-62 47 H92" stroke="#16a64a" strokeWidth=".8" />
      </g>
      <path d="M307 183 L457 226 L474 237 M486 253 L500 258" stroke="#0fae2c" fill="none" />
      <path d="M471 236 L475 241 L479 240" stroke="#d06a20" strokeWidth="1.500" fill="none" />
      <path d="M475 241 L484 243" stroke="#1430d0" strokeWidth="1.500" />
      <rect x="374" y="278" width="9" height="9" fill="#123c66" stroke="#0c1c30" />
      <rect x="375.500" y="279.500" width="6" height="6" fill="none" stroke="#b8c4d0" />
      <path d="M145 374 L152 376 L156 380 L146 377 Z" fill="#e01c24" stroke="#e01c24" />
      <path d="M144 373 L150 378 M150 374 L158 378" stroke="#fff" strokeWidth=".8" fill="none" />
      <path d="M153 378 L158 377 L163 381 L155 380 Z" fill="#1030e0" stroke="#1030e0" />
    </svg>
  </div>
);

const Tracking = () => (
  <section>
    <div className="flex h-[17px] items-center bg-gradient-to-b from-white to-[#ececec] pl-0.5 pr-1">
      <h2>Tracking</h2>
      <button type="button" aria-label="Pin Tracking" className="ml-auto mr-1"><Icon name="pin" className="size-1.5" /></button>
      <button type="button" aria-label="Close Tracking"><Icon name="close" className="size-1.5" /></button>
    </div>
    <div className="flex h-5 items-end gap-[3px] bg-[#f7f7f7] pb-1 pl-1 font-['Liberation_Sans',sans-serif] font-normal">
      <label htmlFor="z" className="w-1.5 text-[8px]">Z</label>
      <input id="z" readOnly value="-201.53" className="h-[13px] w-[42px] border-t border-[#cfcfcf] bg-transparent outline-none" />
      <label htmlFor="x" className="w-1.5 text-[8px]">X</label>
      <input id="x" readOnly value="-405.87" className="h-[13px] w-[42px] border-t border-[#cfcfcf] bg-transparent outline-none" />
      <button type="button" className="h-[9px] w-10 rounded-[1px] border border-[#2c628b] bg-gradient-to-b from-[#d3eefb] to-[#7cc4e8] leading-[7px]">CPL</button>
      <button type="button" className="h-[9px] w-10 rounded-[1px] border border-[#707070] bg-gradient-to-b from-[#f2f2f2] to-[#cfcfcf] leading-[7px]">World</button>
      <button type="button" disabled className="h-[9px] w-10 rounded-[1px] border border-[#adb2b5] bg-[#f4f4f4] leading-[7px] text-[#838383]">Machine</button>
    </div>
  </section>
);

const SideEnd = () => (
  <span className="flex h-2 w-full items-center justify-end bg-gradient-to-r from-[#9a9a9a] to-[#ececec] pr-0.5">
    <span className="h-[3px] w-[3px] bg-[#222]" />
  </span>
);

const SideGroup = ({ items, arrow }) => (
  <div className="flex flex-col items-center rounded bg-gradient-to-r from-white to-[#f0f0f0]">
    <span className="my-0.5 h-0.5 w-3.5 border-t-2 border-dotted border-[#bbb]" />
    {items.map(([name, more, line]) => (
      <div key={name} className={`flex flex-col items-center ${line ? 'border-b border-[#ccc]' : ''}`}>
        <Tool name={name} />
        {more && (
          <button type="button" aria-label={`More ${name}`} className={`${arrow} flex w-4 items-center justify-center`}>
            <svg viewBox="0 0 2 4" className="h-1 w-0.5"><path d="M0 0 V4 L2 2 Z" fill="#222" /></svg>
          </button>
        )}
      </div>
    ))}
    <SideEnd />
  </div>
);

const SideBar = () => (
  <aside className="flex w-[23px] shrink-0 flex-col bg-[#e8e8e8] pl-0.5 pr-px pt-[43px]">
    <SideGroup arrow="h-3" items={[['spline', true, true], ['circle', true, true], ['rect', true, true], ['point', false, true], ['stock']]} />
    <SideGroup arrow="h-2" items={[['boxes', true], ['fillet'], ['chamfer'], ['trim', true], ['modify', true]]} />
  </aside>
);

const modes = [
  ['FREE', 'text-[#8c8c8c]'],
  ['ENTITY', 'bg-[#ffff00] text-[#222]'],
  ['GRID', 'text-[#8c8c8c]'],
  ['INS', 'text-[#8c8c8c]'],
  ['DIA', 'text-[#222]'],
  ['ZX', 'text-[#222] ml-1'],
  ['MM', 'text-[#222]'],
];

const App = () => (
  <div className="flex h-screen min-h-[400px] flex-col overflow-hidden bg-[#f5f5f5] font-['Open_Sans',sans-serif] text-[7px] font-medium leading-3 text-black">
    <TitleBar />
    <MenuBar />
    <MainToolbar />
    <FeatureToolbar />
    <div className="flex min-h-0 flex-1">
      <LeftPanels />
      <main className="flex min-w-0 flex-1 flex-col">
        <Viewport />
        <div className="flex h-4 shrink-0 items-start bg-[#f7f7f7]">
          <span className="h-[13px] w-16 bg-[#a5bddb] pl-px font-['Liberation_Sans',sans-serif] font-normal">Dynamic 1.20</span>
          <div className="ml-auto mt-1 flex gap-px">
            <button type="button" aria-label="Tile horizontally" className="flex h-1.5 w-[7px] items-center justify-center bg-[#333]"><span className="h-0.5 w-1 border-y border-[#ddd]" /></button>
            <button type="button" aria-label="Tile vertically" className="flex h-1.5 w-[7px] items-center justify-center bg-[#333]"><span className="h-1 w-1 border-x border-[#ddd]" /></button>
            <button type="button" aria-label="Close view" className="ml-0.5 flex h-1.5 w-[7px] items-center justify-center bg-[#ccc] opacity-60"><Icon name="close" className="size-1.5" /></button>
          </div>
        </div>
        <Tracking />
      </main>
      <SideBar />
    </div>
    <footer className="flex h-[14px] shrink-0 items-center border-t border-[#c4c4c4] bg-[#f7f4f5] pl-0.5">
      <span>Select face(s) that represent the turned profile</span>
      <div className="ml-auto flex gap-0.5">
        {modes.map(([name, tone]) => (
          <button key={name} type="button" className={`${tone} px-px leading-3`}>{name}</button>
        ))}
      </div>
    </footer>
  </div>
);

export default App;
